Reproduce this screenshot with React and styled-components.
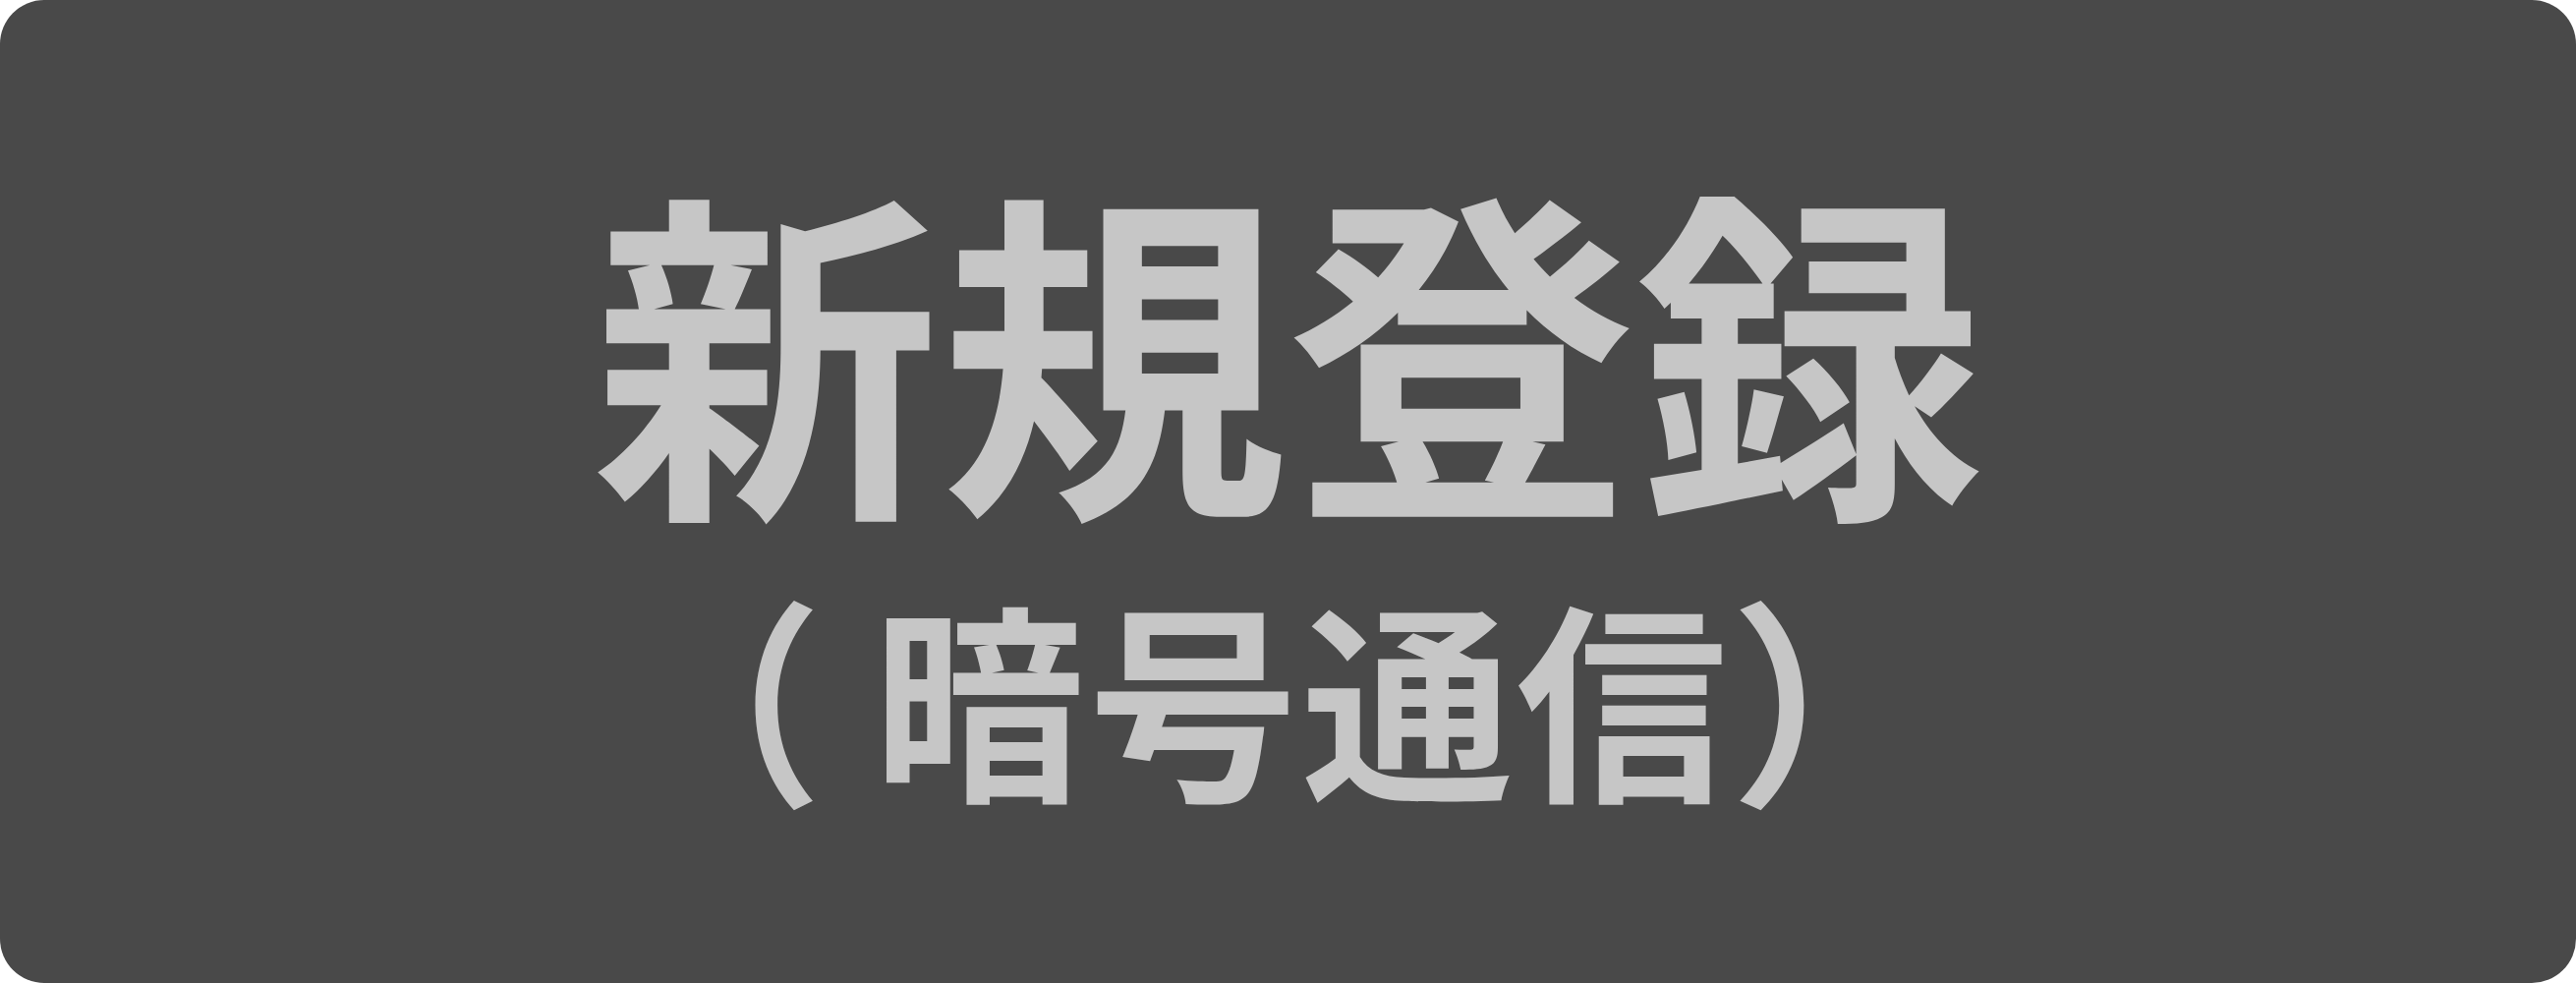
import React from "react";
import styled, { createGlobalStyle } from "styled-components";

const GlobalStyle = createGlobalStyle`
  html, body {
    margin: 0;
    padding: 0;
    background: #ffffff;
  }
  #root {
    width: 2621px;
    height: 1000px;
  }
`;

const Card = styled.div`
  box-sizing: border-box;
  width: 2621px;
  height: 1000px;
  border-radius: 45px;
  background: #494949;
  display: flex;
  flex-direction: column;
  align-items: center;
  padding-top: 170px;
  font-family: "Noto Sans CJK JP", "Noto Sans", sans-serif;
  font-weight: 700;
  color: #c6c6c6;
`;

const Title = styled.div`
  font-size: 354px;
  line-height: 1;
  white-space: nowrap;
`;

const Subtitle = styled.div`
  display: flex;
  align-items: center;
  font-size: 215px;
  line-height: 1;
  white-space: nowrap;
  margin-top: 70px;
  margin-left: -14px;
`;

const Words = styled.span`
  letter-spacing: 3px;
`;

const Paren = styled.span`
  display: inline-block;
  font-size: 222px;
  font-weight: 700;
  margin-left: ${(p) => p.$ml || 0}px;
  margin-right: ${(p) => p.$mr || 0}px;
  transform: scaleX(${(p) => p.$sx || 1});
`;

export default function App() {
  return (
    <>
      <GlobalStyle />
      <Card>
        <Title>新規登録</Title>
        <Subtitle>
          <Paren $mr={42} $sx={0.9}>（</Paren>
          <Words>暗号通信</Words>
          <Paren $ml={0}>）</Paren>
        </Subtitle>
      </Card>
    </>
  );
}
